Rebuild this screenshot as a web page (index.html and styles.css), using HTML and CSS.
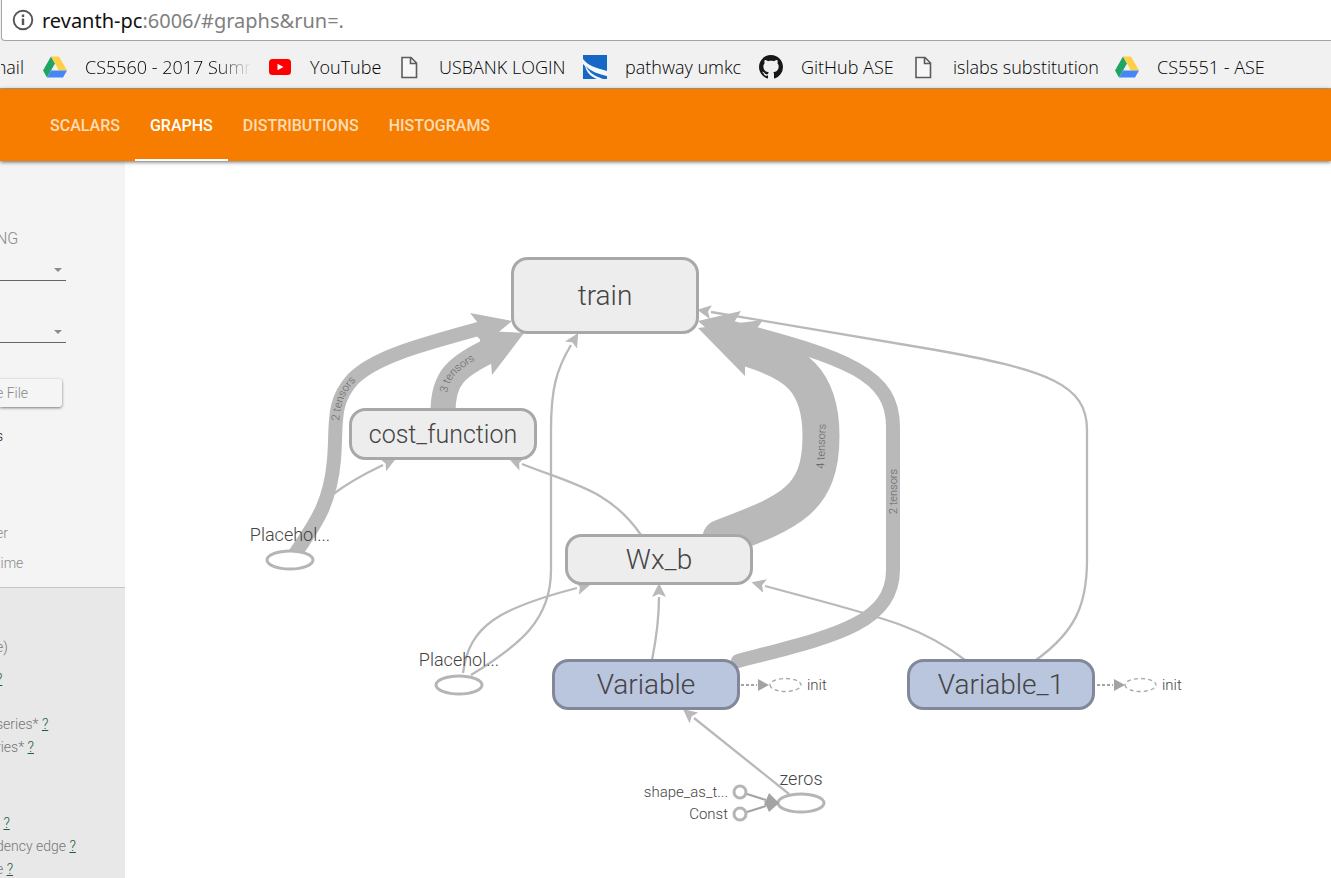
FILE: index.html
```html
<!DOCTYPE html>
<html lang="en">
<head>
<meta charset="utf-8">
<title>TensorBoard</title>
<link rel="stylesheet" href="styles.css">
</head>
<body>
<svg class="defs" aria-hidden="true">
  <symbol id="drive" viewBox="0 0 24 24"><path fill="#1fa463" d="M8 1.500 0 15.500 4 22.500 12 8.500z"/><path fill="#ffcf48" d="M8 1.500h8l8 14h-8z"/><path fill="#4587f4" d="M8 15.500h16l-4 7H4z"/></symbol>
  <symbol id="page" viewBox="0 0 24 24"><path fill="#f7f7f7" stroke="#5c5c5c" stroke-width="1.600" d="M5 2.500h9l5.500 5.500v14.500H5zM13.500 2.500V8.500h6"/></symbol>
</svg>
<div class="browser">
  <div class="address">
    <svg class="info" viewBox="0 0 22 22" aria-hidden="true"><circle cx="11" cy="11" r="9.300" fill="none" stroke="#555" stroke-width="1.900"/><path fill="#555" d="M9.800 5.500h2.400v2.400H9.800zM9.800 9.500h2.400v6.500H9.800z"/></svg>
    <span class="url"><span class="host">revanth-pc</span>:6006/#graphs&amp;run=.</span>
  </div>
  <nav class="bookmarks" aria-label="Bookmarks">
    <a class="bookmark bookmark-cut" href="#"><span>mail</span></a>
    <a class="bookmark" href="#"><svg><use href="#drive"/></svg><span class="fade">CS5560 - 2017 Summ</span></a>
    <a class="bookmark" href="#"><svg viewBox="0 0 24 24"><rect x="1" y="4" width="22" height="16" rx="3.500" fill="#f00"/><path fill="#fff" d="M9.500 8.800v6.400l6-3.200z"/></svg><span>YouTube</span></a>
    <a class="bookmark" href="#"><svg><use href="#page"/></svg><span>USBANK LOGIN</span></a>
    <a class="bookmark" href="#"><svg viewBox="0 0 24 24"><path fill="#1767c5" d="M0 0h24v24H0z"/><path fill="#f4f8fc" d="M0 4C4 10 13 13 24 16v5C15 19 7 16 3 11 6 18 12 21 20 24h-6C9 22 5 19 3 14L2 11 0 9z"/></svg><span>pathway umkc</span></a>
    <a class="bookmark" href="#"><svg viewBox="0 0 16 16"><path fill="#181616" d="M8 0C3.580 0 0 3.580 0 8c0 3.540 2.290 6.530 5.470 7.590.4.070.55-.17.55-.38 0-.19-.01-.82-.01-1.490-2.010.37-2.530-.49-2.690-.94-.09-.23-.48-.94-.82-1.130-.28-.15-.68-.52-.01-.53.63-.01 1.080.58 1.230.82.72 1.210 1.870.87 2.330.66.07-.52.28-.87.51-1.070-1.780-.2-3.640-.89-3.640-3.950 0-.87.31-1.590.82-2.150-.08-.2-.36-1.020.08-2.120 0 0 .67-.21 2.200.82.64-.18 1.320-.27 2-.27s1.360.09 2 .27c1.530-1.040 2.200-.82 2.200-.82.44 1.100.16 1.920.08 2.120.51.56.82 1.270.82 2.150 0 3.070-1.870 3.750-3.650 3.950.29.25.54.73.54 1.480 0 1.070-.01 1.930-.01 2.200 0 .21.15.46.55.38A8.010 8.010 0 0 0 16 8c0-4.420-3.580-8-8-8z"/></svg><span>GitHub ASE</span></a>
    <a class="bookmark" href="#"><svg><use href="#page"/></svg><span>islabs substitution</span></a>
    <a class="bookmark" href="#"><svg><use href="#drive"/></svg><span>CS5551 - ASE</span></a>
  </nav>
</div>
<header class="toolbar">
  <nav class="tabs">
    <a class="tab" href="#scalars">SCALARS</a>
    <a class="tab tab-active" href="#graphs" aria-current="page">GRAPHS</a>
    <a class="tab" href="#distributions">DISTRIBUTIONS</a>
    <a class="tab" href="#histograms">HISTOGRAMS</a>
  </nav>
</header>
<div class="workspace">
  <aside class="sidebar">
    <section class="controls">
      <h2 class="heading">NG</h2>
      <div class="picker"><select class="select" aria-label="Run"><option></option></select><svg class="caret" viewBox="0 0 8 4" aria-hidden="true"><path d="M0 0h8L4 4z"/></svg></div>
      <div class="picker picker-next"><select class="select" aria-label="Session"><option></option></select><svg class="caret" viewBox="0 0 8 4" aria-hidden="true"><path d="M0 0h8L4 4z"/></svg></div>
      <button class="file" type="button">e File</button>
      <p class="line line-dark">s</p>
      <p class="line line-far">er</p>
      <p class="line line-near">time</p>
    </section>
    <section class="legend">
      <p class="entry">e)</p>
      <p class="entry entry-near"><a href="#">?</a></p>
      <p class="entry entry-group">series* <a href="#">?</a></p>
      <p class="entry">ries* <a href="#">?</a></p>
      <p class="entry entry-far">&nbsp;<a href="#">?</a></p>
      <p class="entry">dency edge <a href="#">?</a></p>
      <p class="entry">e <a href="#">?</a></p>
    </section>
  </aside>
  <main class="canvas">
    <svg class="graph" viewBox="125 161 1206 717" preserveAspectRatio="xMinYMin meet" role="img" aria-label="Main graph">
      <defs>
        <marker id="head" markerUnits="userSpaceOnUse" markerWidth="14" markerHeight="14" refX="0" refY="7" orient="auto"><path class="fill" d="M0 0 14 7 0 14 3 7z"/></marker>
        <path id="label-a" d="M339 421C341 400 345 389 366 371"/>
        <path id="label-b" d="M447 393C450 375 460 369 482 356"/>
      </defs>
      <g class="edges">
        <path d="M471 675C520 645 551 620 551 570V430C551 390 556 370 571 345" marker-end="url(#head)"/>
        <path d="M463 673C469 625 500 608 577 588" marker-end="url(#head)"/>
        <path d="M652 660C657 635 659 620 659 597" marker-end="url(#head)"/>
        <path d="M641 535C610 490 575 485 522 464" marker-end="url(#head)"/>
        <path d="M332 495C345 485 360 476 383 465" marker-end="url(#head)"/>
        <path d="M965 660C920 625 880 617 765 586" marker-end="url(#head)"/>
        <path d="M1036 660C1075 632 1087 605 1087 560V430C1087 385 1050 370 930 349L711 312" marker-end="url(#head)"/>
        <path d="M789 794 694 718" marker-end="url(#head)"/>
        <path class="medium" d="M295 554C315 524 330 505 334 460C337 425 331 403 353 379C375 357 420 345 482 328"/>
        <path class="wide" d="M443 412C443 378 455 367 495 348"/>
        <path class="widest" d="M721 538C790 512 821 500 821 436C821 380 796 362 744 347"/>
        <path class="medium round" d="M738 661C830 637 893 625 893 570V427C893 375 850 358 725 326"/>
      </g>
      <g class="fill">
        <path d="M512 321 470 313 482 328 479 348z"/>
        <path d="M524 333 471 330 490 350 492 375z"/>
        <path d="M698 321 741 311 730 329 731 350z"/>
        <path d="M698 328 763 320 745 345 745 376z"/>
      </g>
      <g class="node">
        <rect x="512.500" y="258.500" width="185" height="74" rx="15"/>
        <rect x="350.500" y="409.500" width="185" height="49" rx="15"/>
        <rect x="566.500" y="535.500" width="185" height="48" rx="15"/>
        <rect class="blue" x="553.500" y="660.500" width="185" height="48" rx="15"/>
        <rect class="blue" x="908.500" y="660.500" width="185" height="48" rx="15"/>
        <ellipse cx="290" cy="560" rx="23" ry="9"/>
        <ellipse cx="459" cy="685" rx="23" ry="9"/>
        <ellipse cx="801" cy="803" rx="23" ry="9"/>
        <circle cx="740" cy="792" r="6"/>
        <circle cx="740" cy="814" r="6"/>
      </g>
      <g class="notes">
        <path class="dots" d="M741 685h16M1097 685h16"/>
        <path class="dash" d="M770 685a15.500 6.500 0 1 0 31 0a15.500 6.500 0 1 0-31 0M1125 685a15.500 6.500 0 1 0 31 0a15.500 6.500 0 1 0-31 0"/>
        <path d="M747 794 766 800M747 812 766 806"/>
        <path class="solid" d="M758 679 769 685 758 691zM1114 679 1125 685 1114 691zM769 793 779 803 764 805zM764 801 779 803 769 812z"/>
      </g>
      <g class="title">
        <text x="605" y="305">train</text>
        <text class="title-small" x="443" y="443">cost_function</text>
        <text x="659" y="569">Wx_b</text>
        <text x="646" y="694">Variable</text>
        <text x="1001" y="694">Variable_1</text>
      </g>
      <g class="op">
        <text x="290" y="541">Placehol...</text>
        <text x="459" y="666">Placehol...</text>
        <text x="801" y="785">zeros</text>
      </g>
      <g class="note">
        <text x="807" y="690">init</text>
        <text x="1162" y="690">init</text>
        <text class="end" x="728" y="797">shape_as_t...</text>
        <text class="end" x="728" y="819">Const</text>
      </g>
      <g class="size">
        <text><textPath href="#label-a">2 tensors</textPath></text>
        <text><textPath href="#label-b">3 tensors</textPath></text>
        <text transform="translate(824 469) rotate(-88)">4 tensors</text>
        <text transform="translate(897 514) rotate(-90)">2 tensors</text>
      </g>
    </svg>
  </main>
</div>
</body>
</html>
```
FILE: styles.css
```css
* { box-sizing: border-box; }
body {
  display: flex;
  flex-direction: column;
  min-height: 100vh;
  margin: 0;
  overflow: hidden;
  background: #fff;
  font-family: Roboto, sans-serif;
}
p, h2 { margin: 0; }
.defs { position: absolute; width: 0; height: 0; }

.browser {
  padding-left: 1px;
  border-bottom: 1px solid #b8a48c;
  background: #f1f1f1;
  font-family: "Open Sans", "Noto Sans", sans-serif;
}
.address {
  display: flex;
  align-items: center;
  gap: 8px;
  height: 41px;
  padding-left: 10px;
  border: 1px solid #a5a5a5;
  border-width: 0 0 1px 1px;
  border-radius: 0 0 0 4px;
  background: #fff;
  font-family: "Noto Sans", sans-serif;
  font-size: 20px;
}
.info { width: 22px; height: 22px; }
.url { color: #808080; }
.host { color: #111; }
.bookmarks {
  display: grid;
  grid-template-columns: 42px 225px 129px 186px 176px 152px 204px 1fr;
  align-items: center;
  height: 47px;
  padding-top: 4px;
}
.bookmark {
  display: flex;
  align-items: center;
  gap: 18px;
  color: #000;
  font-size: 18px;
  font-weight: 300;
  line-height: 24px;
  white-space: nowrap;
  text-decoration: none;
}
.bookmark svg { flex: none; width: 24px; height: 24px; }
.bookmark-cut { justify-content: flex-end; padding-right: 19px; overflow: hidden; }
.fade {
  width: 166px;
  overflow: hidden;
  mask-image: linear-gradient(to right, #000 80%, transparent);
}

.toolbar {
  position: relative;
  height: 72px;
  padding-left: 35px;
  background: #f77d00;
  box-shadow: 0 1px 4px rgba(0, 0, 0, .6);
}
.tabs { display: flex; height: 100%; }
.tab {
  display: flex;
  align-items: center;
  padding: 4px 15px 2px;
  border-bottom: 2px solid transparent;
  color: #fddcb8;
  font-size: 16px;
  font-weight: 500;
  text-decoration: none;
}
.tab-active { border-color: #fff; color: #fff; }

.workspace { display: flex; flex: 1; }
.sidebar {
  display: flex;
  flex: none;
  flex-direction: column;
  width: 125px;
  height: 717px;
  overflow: hidden;
  background: #f4f4f4;
  color: #8a8a8a;
  font-weight: 300;
  line-height: 20px;
  white-space: nowrap;
}
.controls { padding: 68px 59px 14px 0; border-bottom: 1px solid #c4c4c4; text-indent: -4px; }
.heading { font-size: 16px; font-weight: 300; line-height: 20px; }
.picker { display: flex; align-items: center; margin-top: 11px; border-bottom: 1px solid #666; }
.picker-next { margin-top: 41px; }
.select { flex: 1; min-width: 0; height: 20px; border: 0; background: none; appearance: none; }
.caret { width: 8px; height: 4px; margin-right: 4px; fill: #8c8c8c; }
.file {
  display: block;
  width: 62px;
  height: 28px;
  margin-top: 36px;
  padding: 0;
  border: 0;
  border-radius: 0 3px 3px 0;
  background: #f5f5f5;
  box-shadow: 0 1px 3px rgba(0, 0, 0, .5);
  color: #888;
  font: 300 14px/28px Roboto, sans-serif;
  text-align: left;
  text-indent: -4px;
}
.line { font-size: 14px; }
.line-dark { margin-top: 19px; color: #222; }
.line-far { margin-top: 77px; }
.line-near { margin-top: 10px; }
.legend { flex: 1; padding-top: 48px; background: #e8e8e8; color: #777; font-size: 14px; text-indent: -4px; }
.entry { line-height: 23px; }
.entry-near { margin-top: 9px; }
.entry-group { margin-top: 22px; }
.entry-far { margin-top: 53px; text-indent: 0; }
.entry a { color: #1c5f3c; }

.canvas { flex: 1; min-width: 0; }
.graph { display: block; width: 100%; }
.fill { fill: #b9b9b9; }
.edges path { fill: none; stroke: #b9b9b9; stroke-width: 2.3; }
.edges .medium { stroke-width: 14px; }
.edges .wide { stroke-width: 25px; }
.edges .widest { stroke-width: 37px; stroke-linecap: round; }
.edges .round { stroke-linecap: round; }
.node { fill: #ededed; stroke: #a8a8a8; stroke-width: 3px; }
.node .blue { fill: #bac5de; stroke: #808899; }
.node ellipse, .node circle { fill: #fff; stroke: #b5b5b5; }
.notes path { fill: none; stroke: #a3a3a3; stroke-width: 2px; }
.notes .dots { stroke-dasharray: 3 2; }
.notes .dash { stroke: #a8a8a8; stroke-width: 1.3; stroke-dasharray: 4 3; }
.notes .solid { fill: #a3a3a3; stroke: none; }
.graph text { fill: #444; font-weight: 300; }
.graph .title { font-size: 28px; text-anchor: middle; }
.title .title-small { font-size: 25px; }
.op { font-size: 18px; text-anchor: middle; }
.note { font-size: 15px; }
.note .end { text-anchor: end; }
.size { font-size: 11px; }
.graph .size text { fill: #666; }
```
